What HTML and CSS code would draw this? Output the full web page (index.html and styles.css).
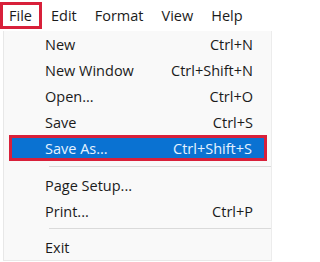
FILE: index.html
```html
<!DOCTYPE html>
<html>
<head>
<meta charset="utf-8">
<link rel="stylesheet" href="styles.css">
</head>
<body>
<div class="menubar">
  <span class="mb-item mb-file">File</span>
  <span class="mb-item">Edit</span>
  <span class="mb-item">Format</span>
  <span class="mb-item">View</span>
  <span class="mb-item">Help</span>
</div>
<div class="menu">
  <div class="row"><span>New</span><span>Ctrl+N</span></div>
  <div class="row"><span>New Window</span><span>Ctrl+Shift+N</span></div>
  <div class="row"><span>Open...</span><span>Ctrl+O</span></div>
  <div class="row"><span>Save</span><span>Ctrl+S</span></div>
  <div class="row active"><span>Save As...</span><span>Ctrl+Shift+S</span></div>
  <div class="sep sep1"></div>
  <div class="row"><span>Page Setup...</span><span></span></div>
  <div class="row"><span>Print...</span><span>Ctrl+P</span></div>
  <div class="sep sep2"></div>
  <div class="row"><span>Exit</span><span></span></div>
</div>
</body>
</html>
```
FILE: styles.css
```css
html, body {
  margin: 0;
  padding: 0;
  background: #ffffff;
}
body {
  font-family: "Open Sans", "Noto Sans", sans-serif;
  font-size: 14.5px;
  color: #1b1b1b;
  width: 277px;
  height: 262px;
  overflow: hidden;
}
.menubar {
  display: flex;
  align-items: center;
  height: 31px;
  box-sizing: border-box;
  padding-top: 2px;
  padding-bottom: 2px;
}
.mb-item {
  display: flex;
  align-items: center;
  height: 26px;
  padding: 0 9px;
  box-sizing: border-box;
}
.mb-file {
  border: 3px solid #d8203a;
  padding: 0 7px 0 6px;
  height: 27px;
  margin-right: 0;
}
.menu {
  margin-left: 3px;
  width: 269px;
  box-sizing: border-box;
  background: #f9f9f9;
  border-left: 1px solid #e8e8e8;
  border-right: 1px solid #ececec;
  border-bottom: 1px solid #e8e8e8;
  padding-bottom: 0;
}
.row {
  display: flex;
  justify-content: space-between;
  align-items: center;
  height: 26px;
  padding: 0 18px 0 41px;
  box-sizing: border-box;
}
.row.active {
  margin: 0 4px 0 5px;
  border: 3px solid #d8203a;
  background: #0a72d2;
  color: #e6f2ff;
  padding: 0 12px 0 33px;
}
.sep {
  height: 1px;
  background: #dadada;
  margin-left: 45px;
  margin-right: 0;
}
.sep1 {
  margin-top: 5px;
  margin-bottom: 5px;
}
.sep2 {
  margin-top: 4px;
  margin-bottom: 5px;
}
```
